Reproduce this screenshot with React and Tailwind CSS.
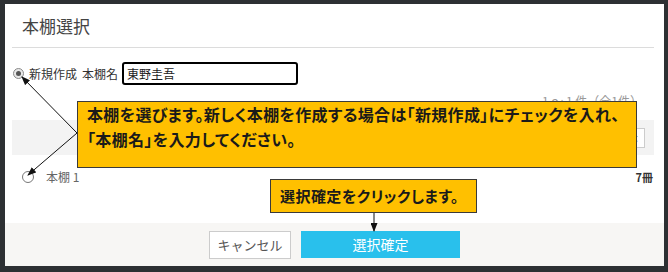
export default function App() {
  return (
    <div className="relative w-[668px] h-[272px] bg-[#2d3033] pt-[4px] pl-[5px] pr-[4px] pb-[6px] overflow-hidden font-['Noto_Sans_CJK_JP',sans-serif]">
      <div className="flex h-full flex-col bg-white">
        <div className="h-[43px] flex items-center pl-[17px] text-[17px] text-[#444]">本棚選択</div>
        <div className="flex-1 flex flex-col ml-[7px] mr-[10px]">
          <div className="h-px bg-[#dcdcdc]" />
          <div className="mt-[14px] h-[23px] flex items-center text-[12px] text-[#333]">
            <span className="ml-[1px] w-[11px] h-[11px] rounded-full border border-[#8a8a8a] bg-[#e8e8e8] flex items-center justify-center">
              <span className="w-[5px] h-[5px] rounded-full bg-[#555]" />
            </span>
            <span className="ml-[5px]">新規作成</span>
            <span className="ml-[5px]">本棚名</span>
            <div className="ml-[4px] w-[176px] h-[23px] border-2 border-black rounded-[3px] px-[3px] flex items-center text-[12px] text-[#222]">東野圭吾</div>
          </div>
          <div className="mt-[8px] text-right pr-[12px] text-[12px] leading-[16px] text-[#999]">1 ～ 1 件（全1件）</div>
          <div className="mt-[11px] h-[35px] bg-[#f3f3f3] flex items-center justify-end pr-[9px]">
            <div className="w-[36px] h-[20px] bg-white border border-[#ccc] flex items-center justify-center text-[11px] text-[#555]">表示</div>
          </div>
          <div className="mt-[14px] h-[16px] flex items-center text-[12px] text-[#666]">
            <span className="ml-[10px] w-[12px] h-[12px] rounded-full border border-[#777] bg-white" />
            <span className="ml-[12px]">本棚 1</span>
            <span className="ml-auto mr-[1px] text-[11px] font-bold text-[#333]">7冊</span>
          </div>
        </div>
        <div className="h-[43px] bg-[#f7f6f4] flex items-center justify-center gap-[10px]">
          <div className="w-[82px] h-[28px] bg-white border border-[#ccc] flex items-center justify-center text-[13px] text-[#555]">キャンセル</div>
          <div className="w-[159px] h-[27px] bg-[#29c0ec] flex items-center justify-center text-[14px] text-white">選択確定</div>
        </div>
      </div>

      <div className="absolute left-[77px] top-[101px] w-[560px] h-[67px] bg-[#ffc000] border border-[#3a3a3a] pl-[9px] font-bold text-[16px] tracking-[0.35px] leading-[25px] text-[#1a1a1a] [font-feature-settings:'palt']">
        <div>本棚を選びます。新しく本棚を作成する場合は「新規作成」にチェックを入れ、</div>
        <div>「本棚名」を入力してください。</div>
      </div>
      <div className="absolute left-[270px] top-[179px] w-[207px] h-[34px] bg-[#ffc000] border border-[#3a3a3a] pl-[9px] flex items-center font-bold text-[15px] tracking-[0.45px] text-[#1a1a1a] [font-feature-settings:'palt']">
        選択確定をクリックします。
      </div>

      <svg className="absolute inset-0 pointer-events-none" width="668" height="272" viewBox="0 0 668 272">
        <defs>
          <marker id="ah" markerWidth="9" markerHeight="7" refX="8" refY="3.5" orient="auto" markerUnits="userSpaceOnUse">
            <path d="M0,0 L9,3.5 L0,7 z" fill="#111" />
          </marker>
        </defs>
        <line x1="77" y1="133" x2="22" y2="77" stroke="#111" strokeWidth="1" markerEnd="url(#ah)" />
        <line x1="77" y1="133" x2="28" y2="175" stroke="#111" strokeWidth="1" markerEnd="url(#ah)" />
        <line x1="374" y1="213" x2="374" y2="231" stroke="#111" strokeWidth="1" markerEnd="url(#ah)" />
      </svg>
    </div>
  );
}
